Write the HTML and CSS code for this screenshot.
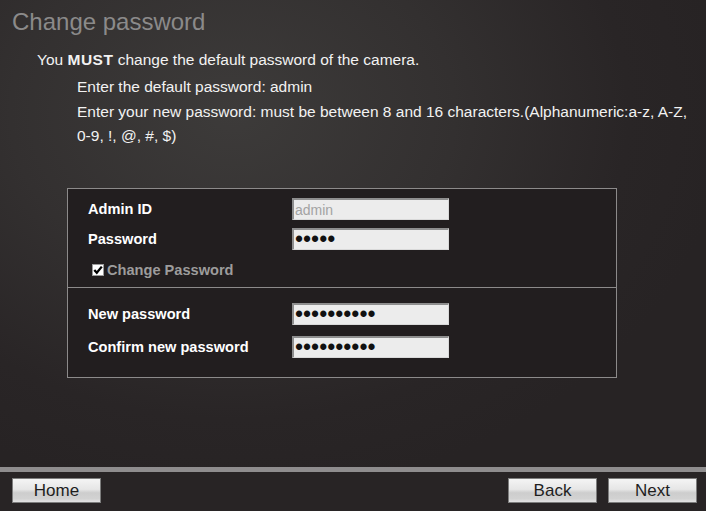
FILE: index.html
```html
<!DOCTYPE html>
<html>
<head>
<meta charset="utf-8">
<link rel="stylesheet" href="styles.css">
</head>
<body>
<div class="page">
  <main class="main">
    <h1 class="title">Change password</h1>
    <p class="lead">You <b class="must">MUST</b> change the default password of the camera.</p>
    <div class="info">
      <p class="line">Enter the default password: admin</p>
      <p class="line">Enter your new password: must be between 8 and 16 characters.(Alphanumeric:a-z, A-Z,<br>0-9, !, @, #, $)</p>
    </div>
    <section class="panel">
      <div class="sec sec-top">
        <div class="row">
          <label class="lbl">Admin ID</label>
          <input class="field field-dis" type="text" value="admin" readonly>
        </div>
        <div class="row">
          <label class="lbl">Password</label>
          <input class="field field-pw" type="password" value="admin">
        </div>
        <div class="row row-check">
          <svg class="chk" width="12" height="12" viewBox="0 0 12 12"><rect x="0.5" y="0.5" width="11" height="11" fill="#fff" stroke="#9a9a9a"/><path d="M2.3 5.9 L4.8 8.8 L9.8 2.6" fill="none" stroke="#000" stroke-width="2.3"/></svg>
          <span class="chk-lbl">Change Password</span>
        </div>
      </div>
      <div class="sec sec-bot">
        <div class="row">
          <label class="lbl">New password</label>
          <input class="field field-pw" type="password" value="password12">
        </div>
        <div class="row">
          <label class="lbl">Confirm new password</label>
          <input class="field field-pw" type="password" value="password12">
        </div>
      </div>
    </section>
  </main>
  <footer class="footer">
    <button class="btn">Home</button>
    <div class="footer-right">
      <button class="btn">Back</button>
      <button class="btn">Next</button>
    </div>
  </footer>
</div>
</body>
</html>
```
FILE: styles.css
```css
* { box-sizing: border-box; }
html, body { margin: 0; padding: 0; }
body {
  width: 706px;
  height: 511px;
  overflow: hidden;
  font-family: "Liberation Sans", Arial, sans-serif;
  background: #282425;
}
.page {
  height: 511px;
  display: flex;
  flex-direction: column;
  background: radial-gradient(ellipse 70% 75% at 33% 22%, #3d3b3a 0%, #333030 45%, #292526 80%, #272324 100%);
}
.main {
  flex: 1;
  display: flex;
  flex-direction: column;
}
.title {
  margin: 0;
  padding: 8px 0 0 12px;
  font-size: 24px;
  line-height: 28px;
  font-weight: normal;
  color: #8b8a8a;
}
.lead {
  margin: 12px 0 0 37px;
  font-size: 15.5px;
  line-height: 24px;
  color: #f2f2f2;
}
.must { letter-spacing: 0.5px; }
.info {
  margin: 3px 0 0 77px;
  display: flex;
  flex-direction: column;
  gap: 1px;
}
.line {
  margin: 0;
  font-size: 15.5px;
  line-height: 24px;
  color: #f2f2f2;
}
.panel {
  margin: 40px 0 0 67px;
  width: 550px;
  border: 1px solid #8c8a8a;
  background: #221e1f;
}
.sec {
  display: flex;
  flex-direction: column;
  padding-left: 20px;
}
.sec-top {
  height: 99px;
  border-bottom: 1px solid #8c8a8a;
  padding-top: 9px;
  gap: 8px;
}
.sec-bot {
  height: 89px;
  padding-top: 15px;
  gap: 11px;
}
.row {
  display: flex;
  align-items: center;
  height: 22px;
}
.row-check {
  height: 24px;
  padding-left: 4px;
  gap: 3px;
}
.lbl {
  width: 204px;
  font-size: 14.6px;
  font-weight: bold;
  color: #ffffff;
}
.field {
  width: 157px;
  height: 22px;
  margin: 0;
  padding: 0 0 0 1px;
  background: #ececec;
  border-style: solid;
  border-width: 2px 1px 1px 2px;
  border-color: #8e8e8e #d9d9d9 #d9d9d9 #8e8e8e;
  font-family: "Liberation Sans", Arial, sans-serif;
  outline: none;
}
.field-dis {
  font-size: 14px;
  color: #a3a3a3;
}
.field-pw {
  font-size: 23px;
  color: #111;
}
.chk { display: block; }
.chk-lbl {
  font-size: 14.6px;
  font-weight: bold;
  color: #9d9c9c;
}
.footer {
  height: 44px;
  border-top: 5px solid #8f8d8e;
  background: #282425;
  display: flex;
  justify-content: space-between;
  align-items: flex-start;
  padding: 6px 9px 0 12px;
}
.footer-right {
  display: flex;
  gap: 11px;
}
.btn {
  width: 89px;
  height: 25px;
  margin: 0;
  padding: 0;
  border: 1px solid #7d7d7d;
  background: linear-gradient(to bottom, #f4f4f4 0%, #e6e6e6 45%, #cdcdcd 60%, #d2d2d2 85%, #e2e2e2 100%);
  font-family: "Liberation Sans", Arial, sans-serif;
  font-size: 17px;
  line-height: 23px;
  color: #1e1e1e;
}
```
